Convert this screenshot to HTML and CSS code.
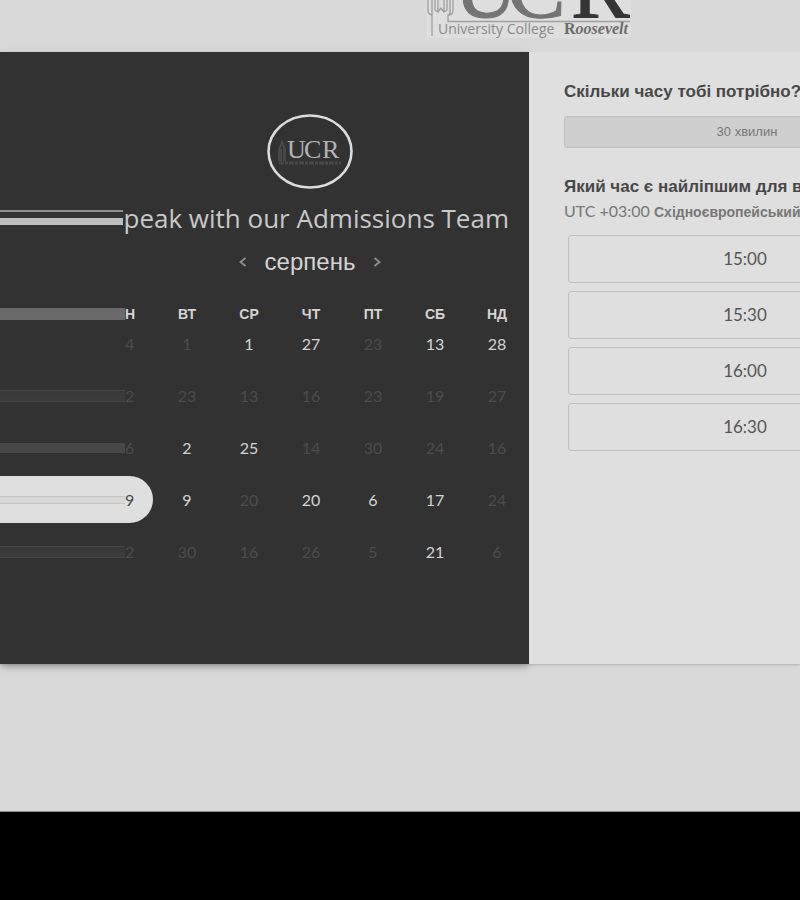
FILE: index.html
```html
<!DOCTYPE html>
<html lang="uk">
<head>
<meta charset="utf-8">
<meta name="viewport" content="width=device-width, initial-scale=1">
<title>Speak with our Admissions Team</title>
<link rel="stylesheet" href="styles.css">
</head>
<body>
<header class="top">
  <svg class="logo" viewBox="0 0 204 38" role="img" aria-label="University College Roosevelt">
    <rect width="204" height="38" fill="#dedede"/>
    <g fill="none" stroke="#a0a0a0" stroke-width="1.3">
      <path d="M1 0V11Q1 14 5 15V36M5 0V15M8 0V10L11 12L14 8L17 12L20 10V0M11 0V12M17 0V12M23 0V12Q23 15 21 15V21.500H203M26 0V11Q26 14 22 15"/>
    </g>
    <g class="logo-letters">
      <text x="27" y="17" fill="#747474" stroke="#747474">U</text>
      <text x="80" y="17" fill="#747474" stroke="#747474">C</text>
      <text x="144" y="17" fill="#353535" stroke="#353535">R</text>
    </g>
    <text class="logo-name" x="11" y="34">University College</text>
    <text class="logo-roos" x="137" y="34">R<tspan font-style="italic">oosevelt</tspan></text>
  </svg>
</header>
<main class="stage">
  <div class="card">
    <section class="calendar">
      <div class="middle">
        <svg class="avatar" viewBox="0 0 86 75" role="img" aria-label="UCR">
          <ellipse cx="43" cy="37.500" rx="41.500" ry="36" fill="none" stroke="#dcdcdc" stroke-width="2.600"/>
          <path d="M12 47V36L15 28L18 35V47M14 47V35M17 47V35" fill="none" stroke="#484848" stroke-width="2"/>
          <path d="M12 49H74" stroke="#484848" stroke-width="3" stroke-dasharray="5 1 3 1"/>
          <g class="avatar-letters"><text x="20" y="44">U</text><text x="37" y="44">C</text><text x="55" y="44">R</text></g>
        </svg>
      </div>
      <div class="title"><span class="streak streak-title"></span><h1>peak with our Admissions Team</h1></div>
      <div class="middle month">
        <button class="arrow" aria-label="Попередній місяць"><svg viewBox="0 0 8 10"><path d="M6.500 1L1.500 5L6.500 9"/></svg></button>
        <h2>серпень</h2>
        <button class="arrow" aria-label="Наступний місяць"><svg viewBox="0 0 8 10"><path d="M1.500 1L6.500 5L1.500 9"/></svg></button>
      </div>
      <div class="grid">
      <table class="days">
        <thead><tr><th><div class="lead"><span class="streak streak-head"></span><span class="lead-text">Н</span></div></th><th>ВТ</th><th>СР</th><th>ЧТ</th><th>ПТ</th><th>СБ</th><th>НД</th></tr></thead>
        <tbody>
          <tr><td><button class="lead" disabled><span class="streak"></span><span class="lead-text">4</span></button></td><td><button disabled>1</button></td><td><button>1</button></td><td><button>27</button></td><td><button disabled>23</button></td><td><button>13</button></td><td><button>28</button></td></tr>
          <tr><td><button class="lead" disabled><span class="streak streak-lines"></span><span class="lead-text">2</span></button></td><td><button disabled>23</button></td><td><button disabled>13</button></td><td><button disabled>16</button></td><td><button disabled>23</button></td><td><button disabled>19</button></td><td><button disabled>27</button></td></tr>
          <tr><td><button class="lead" disabled><span class="streak streak-solid"></span><span class="lead-text">6</span></button></td><td><button>2</button></td><td><button>25</button></td><td><button disabled>14</button></td><td><button disabled>30</button></td><td><button disabled>24</button></td><td><button disabled>16</button></td></tr>
          <tr><td><button class="lead selected"><span class="streak streak-light"></span><span class="lead-text">9</span></button></td><td><button>9</button></td><td><button disabled>20</button></td><td><button>20</button></td><td><button>6</button></td><td><button>17</button></td><td><button disabled>24</button></td></tr>
          <tr><td><button class="lead" disabled><span class="streak streak-lines"></span><span class="lead-text">2</span></button></td><td><button disabled>30</button></td><td><button disabled>16</button></td><td><button disabled>26</button></td><td><button disabled>5</button></td><td><button>21</button></td><td><button disabled>6</button></td></tr>
        </tbody>
      </table>
      </div>
    </section>
    <section class="booking">
      <div class="booking-inner">
        <h3>Скільки часу тобі потрібно?</h3>
        <button class="duration">30 хвилин</button>
        <h3>Який час є найліпшим для вас?</h3>
        <p class="zone">UTC +03:00 <b>Східноєвропейський час</b></p>
        <div class="times">
          <button>15:00</button>
          <button>15:30</button>
          <button>16:00</button>
          <button>16:30</button>
        </div>
      </div>
    </section>
  </div>
</main>
<footer class="bottom"></footer>
</body>
</html>
```
FILE: styles.css
```css
* { box-sizing: border-box; }
body {
  margin: 0;
  min-height: 100vh;
  display: flex;
  flex-direction: column;
  overflow-x: hidden;
  background: #d9d9d9;
  color: #484848;
  font-family: "Liberation Sans", sans-serif;
}
h1, h2, h3, p { margin: 0; }
button { font: inherit; color: inherit; background: none; border: 0; padding: 0; }

.top { height: 52px; padding-left: 427px; }
.logo { display: block; width: 204px; height: 38px; overflow: hidden; }
.logo-letters { font: 88px "Liberation Serif", serif; stroke-width: 1px; }
.logo-name { font: 14px "Open Sans", sans-serif; fill: #8a8a8a; }
.logo-roos { font: bold 16px "Liberation Serif", serif; fill: #6c6c6c; }

.stage { flex: 1; }
.card {
  display: grid;
  grid-template-columns: minmax(0, 529fr) minmax(0, 271fr);
  min-height: 612px;
  box-shadow: 0 1px 2px #b0b0b0;
}
.calendar {
  padding-top: 62px;
  background: #323232;
  color: #d4d4d4;
  box-shadow: 0 3px 8px -1px #8c8c8c;
}
.middle {
  width: 438px;
  margin-left: auto;
  display: flex;
  justify-content: center;
  align-items: center;
}
.avatar { width: 86px; height: 75px; }
.avatar-letters { font: 26px "Liberation Serif", serif; fill: #b4b4b4; }

.streak { flex: 1; height: 12px; }
.title { display: flex; align-items: center; height: 32px; margin-top: 13px; padding-right: 20px; }
.title h1 { font: 26px/32px "Open Sans", sans-serif; white-space: nowrap; color: #c8c8c8; }
.streak-title {
  height: 16px;
  background: linear-gradient(#929292 0 2px, #323232 2px 8px, #bdbdbd 8px 15px, #323232 15px);
}
.month { gap: 18px; height: 32px; margin-top: 12px; }
.month h2 { font-size: 24px; line-height: 32px; font-weight: normal; }
.arrow { display: flex; }
.arrow svg { width: 8px; height: 10px; fill: none; stroke: #8c8c8c; stroke-width: 2; }

.grid { margin-top: 30px; padding-right: 1px; }
.days { width: 100%; border-collapse: collapse; table-layout: fixed; }
.days th, .days td { width: 62px; padding: 0; }
.days th:first-child, .days td:first-child { width: auto; }
.days th { font-size: 14px; line-height: 12px; }
.days td { height: 52px; vertical-align: top; }
.days button { width: 100%; height: 47px; font-family: Lato, sans-serif; font-size: 16px; }
.days button:disabled { color: #4c4c4c; }
.days .lead { display: flex; align-items: center; width: calc(100% - 3px); }
.lead-text { width: 28px; text-align: left; }
.streak-head { background: #696969; }
.streak-lines { border: solid #454545; border-width: 1px 0; background: linear-gradient(#373737, #3d3d3d); }
.streak-solid { height: 10px; background: #484848; }
.streak-light { height: 8px; border: solid #c4c4c4; border-width: 1px 0; background: #d8d8d8; }
.days .selected { background: #dfdfdf; color: #4a4a4a; border-radius: 0 24px 24px 0; }

.booking { min-width: 0; overflow: hidden; padding: 30px 0 0 35px; background: #dfdfdf; }
.booking-inner { width: 366px; }
.booking h3 { font-size: 17px; line-height: 20px; white-space: nowrap; }
.duration {
  width: 100%;
  height: 32px;
  margin: 14px 0 29px;
  padding-bottom: 2px;
  background: #cfcfcf;
  border: 1px solid #bebebe;
  border-radius: 3px;
  font-size: 13px;
  color: #777;
}
.zone { margin-top: 4px; font: 16px/20px Lato, sans-serif; color: #777; white-space: nowrap; }
.zone b { font: bold 14px/20px "Liberation Sans", sans-serif; }
.times { display: flex; flex-direction: column; gap: 8px; margin-top: 13px; padding: 0 8px 0 4px; }
.times button {
  height: 48px;
  padding-bottom: 2px;
  border: 1px solid #bebebe;
  border-radius: 3px;
  font-family: Lato, sans-serif;
  font-size: 17px;
  color: #555;
}
.bottom { height: 89px; background: #000; border-top: 1px solid #8c8c8c; }
```
